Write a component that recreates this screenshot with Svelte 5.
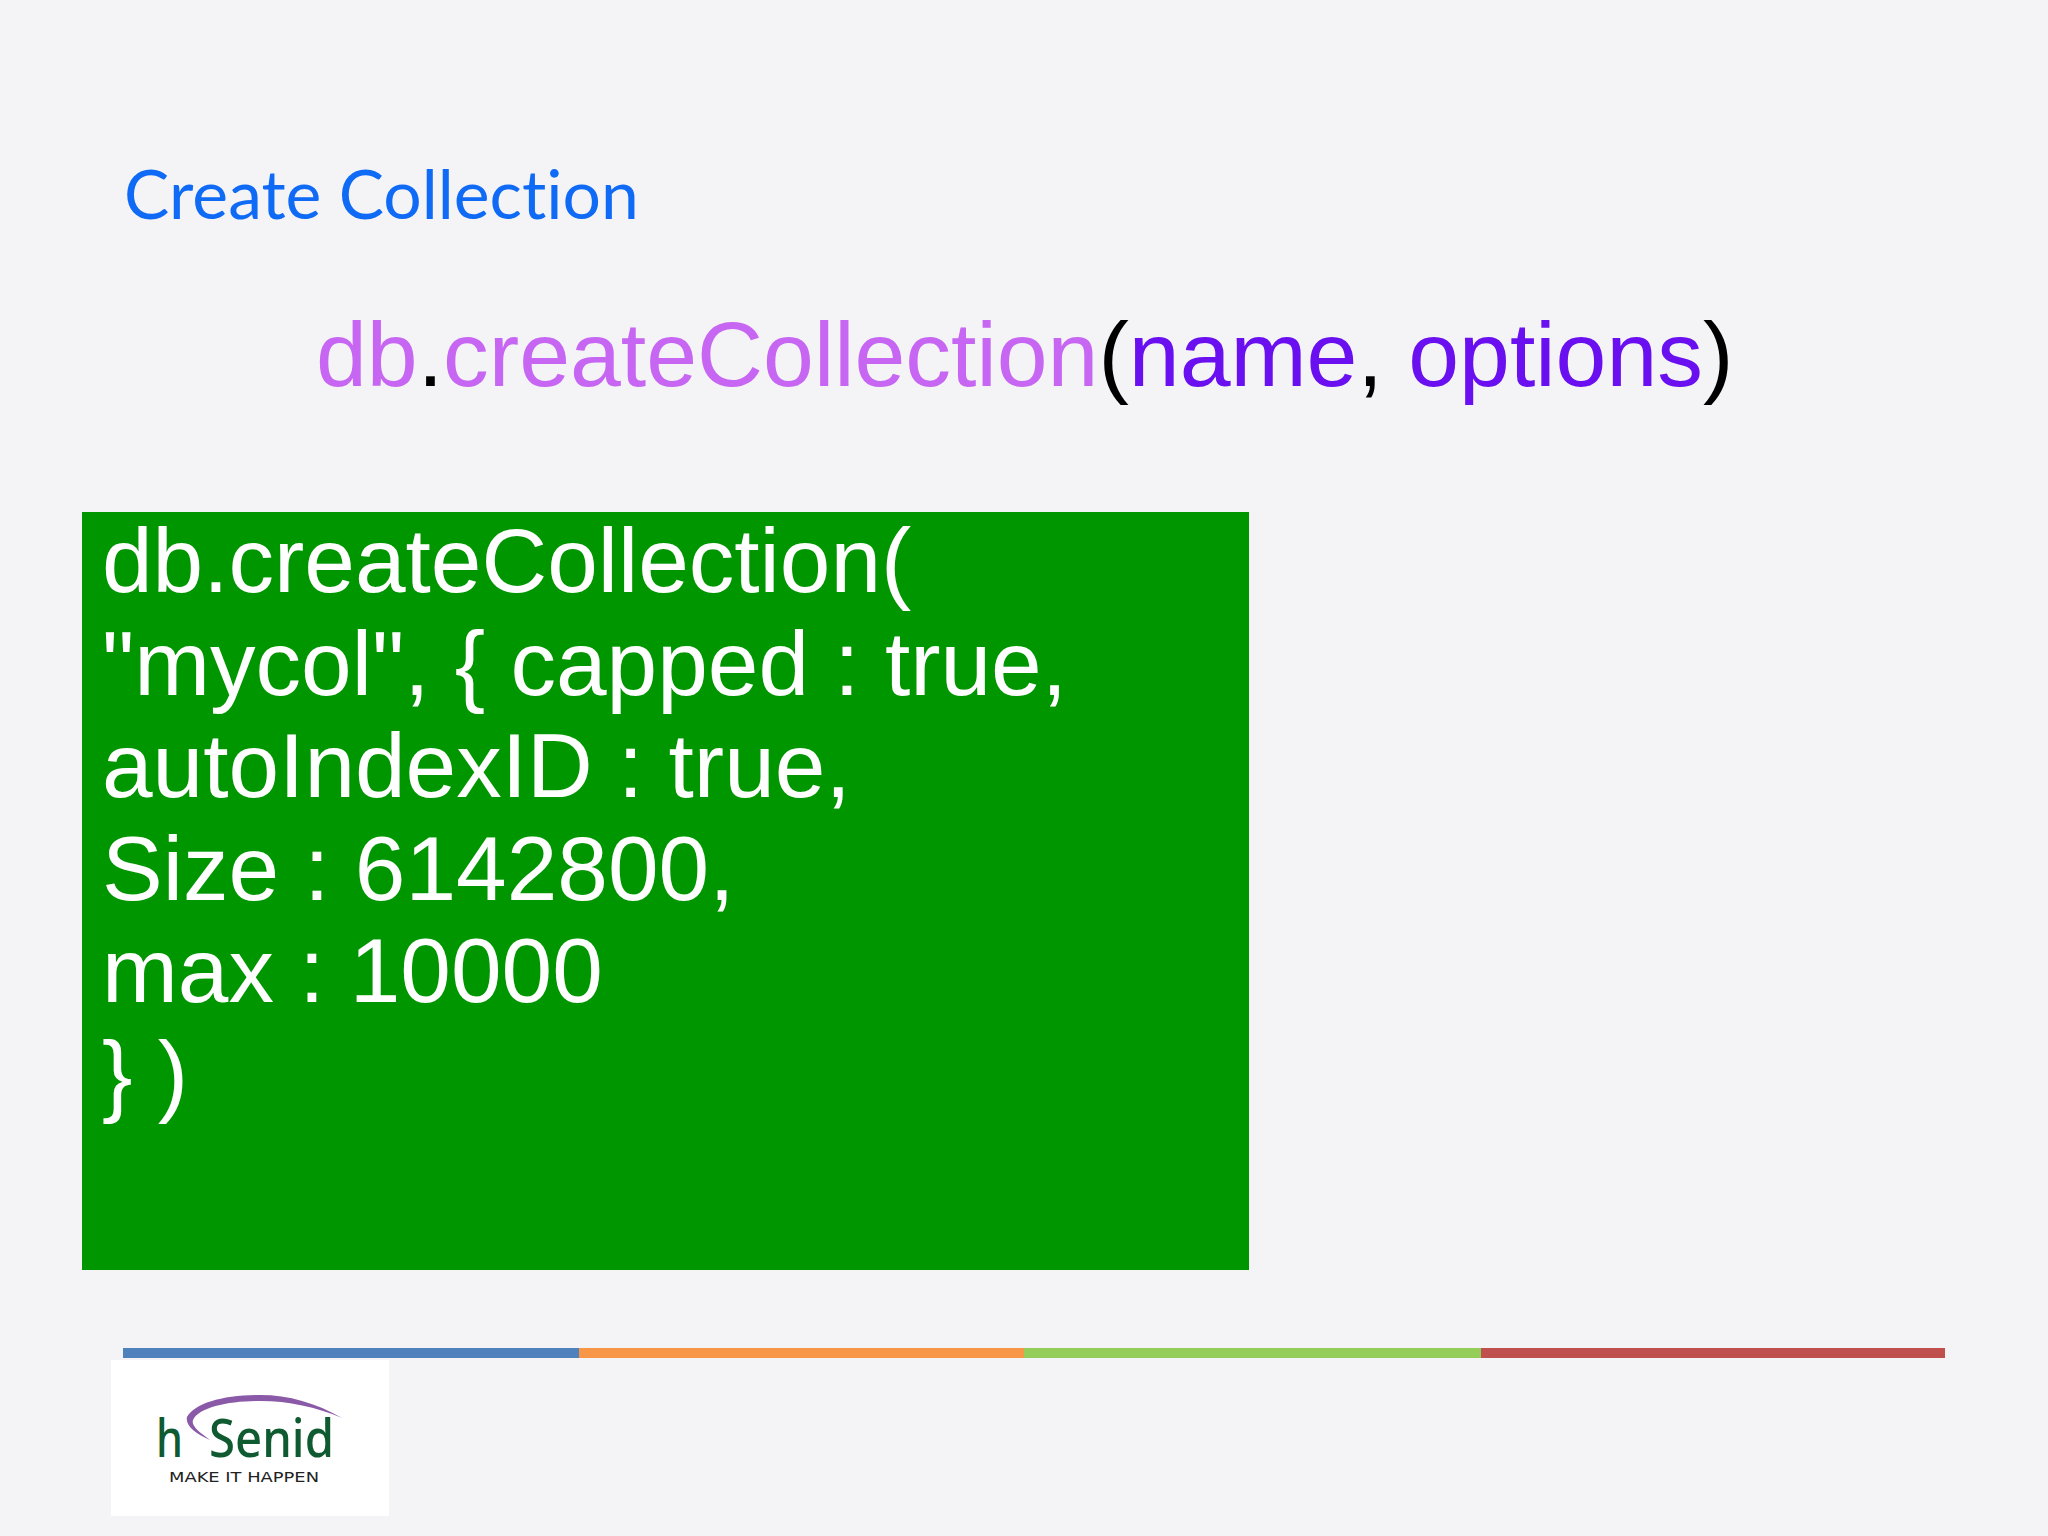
<script>
  const code = ['db.createCollection(', '"mycol", { capped : true,', 'autoIndexID : true,', 'Size : 6142800,', 'max : 10000', '} )'];
</script>

<main class="slide">
  <h1 class="title">Create Collection</h1>
  <p class="signature"><span class="fn">db</span>.<span class="fn">createCollection</span>(<span class="arg">name</span>, <span class="arg">options</span>)</p>
  <section class="code">
    <div class="lines">
      {#each code as line}
        <div>{line}</div>
      {/each}
    </div>
  </section>
  <div class="rule">
    <span class="blue"></span><span class="orange"></span><span class="green"></span><span class="red"></span>
  </div>
  <div class="logo">
    <svg width="278" height="156" viewBox="0 0 278 156">
      <path d="M231 58 C205 43 178 35 149 35 C112 35 84 43 76 57 C74 66 85 74 99 80 C88 72 80 66 82 60 C88 47 118 41 149 41 C178 41 205 47 231 58 Z" fill="#8a5aa8"/>
      <text x="45" y="97" class="brand" textLength="27" lengthAdjust="spacingAndGlyphs">h</text>
      <text x="98" y="97" class="brand" textLength="125" lengthAdjust="spacingAndGlyphs">Senid</text>
      <text x="58" y="122" class="tag" textLength="150" lengthAdjust="spacingAndGlyphs">MAKE IT HAPPEN</text>
    </svg>
  </div>
</main>

<style>
  :global(body) { margin: 0; background: #f4f4f6; }
  .slide {
    width: 2048px;
    height: 1536px;
    box-sizing: border-box;
    background: #f4f4f6;
    display: flex;
    flex-direction: column;
    overflow: hidden;
    font-family: "Liberation Sans", Arial, sans-serif;
  }
  .title {
    margin: 153px 0 0 124px;
    font: 400 67.8px/80px Lato, "Open Sans", sans-serif;
    font-variant-ligatures: none;
    color: #0f6af5;
  }
  .signature {
    margin: 71px 0 0 316px;
    font-size: 91.4px;
    line-height: 100px;
    color: #000;
    white-space: nowrap;
  }
  .fn { color: #c666f2; }
  .arg { color: #6a0ff0; }
  .code {
    margin: 108px 0 0 82px;
    width: 1167px;
    height: 758px;
    box-sizing: border-box;
    padding: 0 0 0 20px;
    background: #009600;
    color: #fff;
    font-size: 91px;
    line-height: 102.5px;
  }
  .lines { margin-top: -2px; }
  .rule {
    margin: 78px 0 0 123px;
    width: 1822px;
    height: 10px;
    display: flex;
  }
  .rule span { display: block; height: 100%; }
  .blue { width: 456px; background: #4f81bd; }
  .orange { width: 445px; background: #f79646; }
  .green { width: 457px; background: #94ce58; }
  .red { width: 464px; background: #c0504d; }
  .logo {
    margin: 2px 0 0 111px;
    width: 278px;
    height: 156px;
    background: #fff;
  }
  .logo svg { display: block; }
  .brand { font: 500 53px "Noto Sans", sans-serif; fill: #0f5a30; }
  .tag { font: 400 14px "DejaVu Sans", sans-serif; fill: #222; }
</style>
